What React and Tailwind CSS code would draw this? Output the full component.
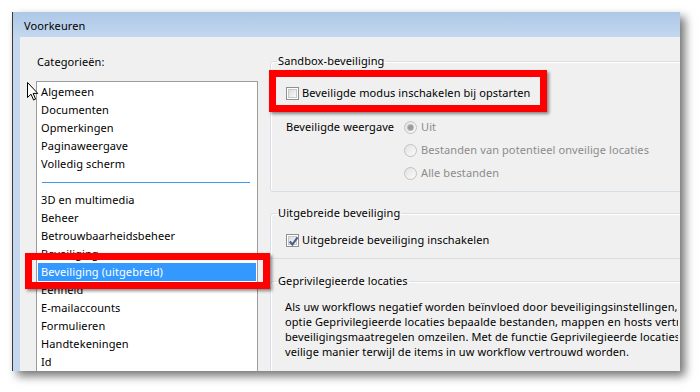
const general = ["Algemeen", "Documenten", "Opmerkingen", "Paginaweergave", "Volledig scherm"];
const other = [
  "3D en multimedia",
  "Beheer",
  "Betrouwbaarheidsbeheer",
  "Beveiliging",
  "Beveiliging (uitgebreid)",
  "Eenheid",
  "E-mailaccounts",
  "Formulieren",
  "Handtekeningen",
  "Id",
];
const selected = "Beveiliging (uitgebreid)";

const Checkbox = ({ checked }) => (
  <span className="flex h-[13px] w-[13px] shrink-0 items-center justify-center border border-[#8e8f8f] bg-white p-px">
    <span className="relative h-full w-full border border-[#c8c8c8] bg-gradient-to-br from-[#dcdcdc] to-[#fafafa]">
      {checked && (
        <svg viewBox="0 0 9 9" className="absolute left-[-1px] top-[-1px] h-[11px] w-[11px]">
          <path d="M1.5 4.5 L3.6 7 L7.8 1.2" fill="none" stroke="#4a5e8f" strokeWidth="1.8" />
        </svg>
      )}
    </span>
  </span>
);

const Radio = ({ checked }) => (
  <span className="flex h-[13px] w-[13px] shrink-0 items-center justify-center rounded-full border border-[#c2c2c2] bg-gradient-to-br from-[#e2e2e2] to-[#fbfbfb]">
    {checked && <span className="h-[5px] w-[5px] rounded-full bg-[#9a9a9a] ring-1 ring-[#bdbdbd]" />}
  </span>
);

const Group = ({ title, className, children }) => (
  <fieldset className={"w-[420px] shrink-0 rounded-[3px] border border-[#d5dfe5] shadow-[inset_1px_1px_0_#ffffff] " + className}>
    <legend className="ml-[6px] px-px text-[11px] leading-[16px]">{title}</legend>
    {children}
  </fieldset>
);

const Item = ({ label }) => (
  <div
    className={
      "mx-px h-[18px] whitespace-nowrap pl-[3px] leading-[18px] " +
      (label === selected ? "bg-[#3399ff] text-white" : "")
    }
  >
    {label}
  </div>
);

export default function App() {
  return (
    <div className="relative h-[392px] w-[700px] overflow-hidden bg-white pl-[12px] pt-[12px] font-['Noto_Sans',sans-serif] text-[11px] tracking-[0.1px] text-black">
      <div className="flex h-[359px] w-[668px] flex-col overflow-hidden border-l border-[#3a3a3a] shadow-[5px_5px_9px_rgba(0,0,0,0.55)]">
        <div className="flex h-[25px] shrink-0 items-center bg-gradient-to-b from-[#adc7e6] to-[#c3d8ef] pl-[11px] pt-[3px]">
          Voorkeuren
        </div>
        <div className="flex min-h-0 flex-1">
          <div className="w-[7px] shrink-0 bg-[#c3d8ef]" />
          <div className="flex flex-1 overflow-hidden bg-[#f0f0f0]">
            <div className="flex w-[250px] shrink-0 flex-col overflow-hidden pt-[17px]">
              <div className="pl-[17px] leading-[16px]">Categorieën:</div>
              <div className="ml-[16px] mt-[11px] h-[320px] w-[222px] shrink-0 border border-[#9c9c9c] bg-white pt-px">
                {general.map((c) => (
                  <Item key={c} label={c} />
                ))}
                <div className="flex h-[18px] items-center">
                  <div className="ml-[5px] h-px w-[208px] bg-[#3b9af0]" />
                </div>
                {other.map((c) => (
                  <Item key={c} label={c} />
                ))}
              </div>
            </div>

            <div className="flex min-w-0 flex-1 flex-col overflow-hidden pt-[16px]">
              <Group title="Sandbox-beveiliging" className="">
                <div className="pb-[6px] pl-[15px] pt-[13px]">
                  <div className="flex h-[23px] items-center gap-[3px]">
                    <Checkbox />
                    <span>Beveiligde modus inschakelen bij opstarten</span>
                  </div>
                  <div className="mt-[11px] flex">
                    <div className="flex h-[23px] w-[118px] shrink-0 items-center">Beveiligde weergave</div>
                    <div className="flex flex-col text-[#8c8c8c]">
                      {[
                        ["Uit", true],
                        ["Bestanden van potentieel onveilige locaties", false],
                        ["Alle bestanden", false],
                      ].map(([t, on]) => (
                        <div key={t} className="flex h-[23px] items-center gap-[4px]">
                          <Radio checked={on} />
                          <span>{t}</span>
                        </div>
                      ))}
                    </div>
                  </div>
                </div>
              </Group>

              <Group title="Uitgebreide beveiliging" className="mt-[13px]">
                <div className="pb-[6px] pl-[15px] pt-[8px]">
                  <div className="flex h-[23px] items-center gap-[3px]">
                    <Checkbox checked />
                    <span>Uitgebreide beveiliging inschakelen</span>
                  </div>
                </div>
              </Group>

              <Group title="Geprivilegieerde locaties" className="mt-[14px]">
                <div className="w-[407px] overflow-hidden whitespace-nowrap pb-[20px] pl-[14px] pt-[10px] leading-[15px]">
                  <div>Als uw workflows negatief worden beïnvloed door beveiligingsinstellingen,</div>
                  <div>optie Geprivilegieerde locaties bepaalde bestanden, mappen en hosts vertrouwen</div>
                  <div>beveiligingsmaatregelen omzeilen. Met de functie Geprivilegieerde locaties</div>
                  <div>veilige manier terwijl de items in uw workflow vertrouwd worden.</div>
                </div>
              </Group>
            </div>
          </div>
        </div>
      </div>

      {/* annotation boxes */}
      <div className="absolute left-[269px] top-[70px] h-[42px] w-[278px] border-[7px] border-[#ff0000] shadow-[2px_2px_3px_rgba(0,0,0,0.45)]" />
      <div className="absolute left-[25px] top-[253px] h-[36px] w-[245px] border-[7px] border-[#ff0000] shadow-[2px_2px_3px_rgba(0,0,0,0.45)]" />

      {/* mouse pointer */}
      <svg viewBox="0 0 12 19" className="absolute left-[27px] top-[82px] h-[19px] w-[12px]">
        <path d="M0.5 0.5 L0.5 15.5 L4 12.2 L6.6 18 L8.6 17.1 L6.1 11.4 L10.8 11.4 Z" fill="#ffffff" stroke="#000000" strokeWidth="1" strokeLinejoin="miter" />
      </svg>
    </div>
  );
}
